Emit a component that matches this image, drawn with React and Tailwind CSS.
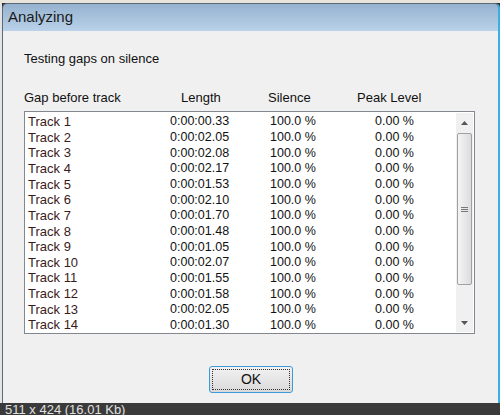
import React from 'react';

const tracks = [
  ['Track 1', '0:00:00.33'],
  ['Track 2', '0:00:02.05'],
  ['Track 3', '0:00:02.08'],
  ['Track 4', '0:00:02.17'],
  ['Track 5', '0:00:01.53'],
  ['Track 6', '0:00:02.10'],
  ['Track 7', '0:00:01.70'],
  ['Track 8', '0:00:01.48'],
  ['Track 9', '0:00:01.05'],
  ['Track 10', '0:00:02.07'],
  ['Track 11', '0:00:01.55'],
  ['Track 12', '0:00:01.58'],
  ['Track 13', '0:00:02.05'],
  ['Track 14', '0:00:01.30']
];

function Scrollbar() {
  return (
    <div className="flex h-full w-[17px] flex-col bg-[#f0f0f0]">
      <div className="flex h-[20px] items-center justify-center">
        <svg width="7" height="4" viewBox="0 0 7 4">
          <path d="M3.5 0 L7 4 L0 4 Z" fill="#555" />
        </svg>
      </div>
      <div className="mx-[1px] flex h-[152px] items-center justify-center rounded-[2px] border border-[#a0a0a0] bg-gradient-to-r from-[#f4f4f4] to-[#dcdcdc]">
        <div className="flex flex-col gap-[1px]">
          <div className="h-[1px] w-[7px] bg-[#777]" />
          <div className="h-[1px] w-[7px] bg-[#777]" />
          <div className="h-[1px] w-[7px] bg-[#777]" />
        </div>
      </div>
      <div className="flex-1" />
      <div className="flex h-[18px] items-center justify-center">
        <svg width="7" height="4" viewBox="0 0 7 4">
          <path d="M0 0 L7 0 L3.5 4 Z" fill="#555" />
        </svg>
      </div>
    </div>
  );
}

export default function App() {
  return (
    <div
      className="flex h-[415px] w-[500px] flex-col overflow-hidden bg-[#2a2a2a] text-[13px] text-[#111]"
      style={{ fontFamily: '"Liberation Sans", Arial, sans-serif' }}
    >
      <div className="h-[3px] bg-[#e8e4dc]" />
      <div className="flex flex-1">
        <div className="w-[2px] bg-[#e4e4e4]" />
        <div className="flex flex-1 flex-col overflow-hidden rounded-tl-[5px] rounded-tr-[5px] border-l border-t border-[#5a6a7a] border-r-2 border-r-[#3ab0e2]">
          <div className="flex h-[27px] items-center bg-gradient-to-b from-[#96b2cf] to-[#bad2ea] pl-[5px] text-[15px] text-[#1a1a1a]">
            Analyzing
          </div>
          <div className="flex flex-1 flex-col bg-[#f0f0f0] pl-[21px]">
            <div className="mt-[20px] h-[16px] leading-[16px]">Testing gaps on silence</div>
            <div className="mt-[23px] flex h-[16px] leading-[16px]">
              <span className="w-[157px]">Gap before track</span>
              <span className="w-[87px]">Length</span>
              <span className="w-[89px]">Silence</span>
              <span>Peak Level</span>
            </div>
            <div className="mt-[5px] flex h-[223px] w-[451px] border border-[#828790] bg-white">
              <div className="flex flex-1 flex-col pl-[3px] pt-[2px]">
                {tracks.map(([name, len]) => (
                  <div key={name} className="flex h-[15.65px] items-center">
                    <span className="w-[142px] text-[#3a1a1a]">{name}</span>
                    <span className="w-[100px] text-[12.5px]">{len}</span>
                    <span className="w-[105px] text-[12.5px]">100.0 %</span>
                    <span className="text-[12.5px]">0.00 %</span>
                  </div>
                ))}
              </div>
              <div className="py-[1px] pr-[1px]">
                <Scrollbar />
              </div>
            </div>
            <div className="mt-[32px] flex justify-center pr-[20px]">
              <button className="flex h-[27px] w-[84px] items-center justify-center rounded-[3px] border border-[#3c9ad8] bg-gradient-to-b from-[#f2f2f2] to-[#dadada] p-[2px] text-[14px]">
                <span className="flex h-full w-full items-center justify-center border border-dotted border-[#333]">
                  OK
                </span>
              </button>
            </div>
          </div>
        </div>
      </div>
      <div className="h-[12px] overflow-hidden bg-[#3a3a3a] pl-[5px] text-[13px] leading-[13px] text-[#e0e0e0]">
        511 x 424 (16.01 Kb)
      </div>
    </div>
  );
}
